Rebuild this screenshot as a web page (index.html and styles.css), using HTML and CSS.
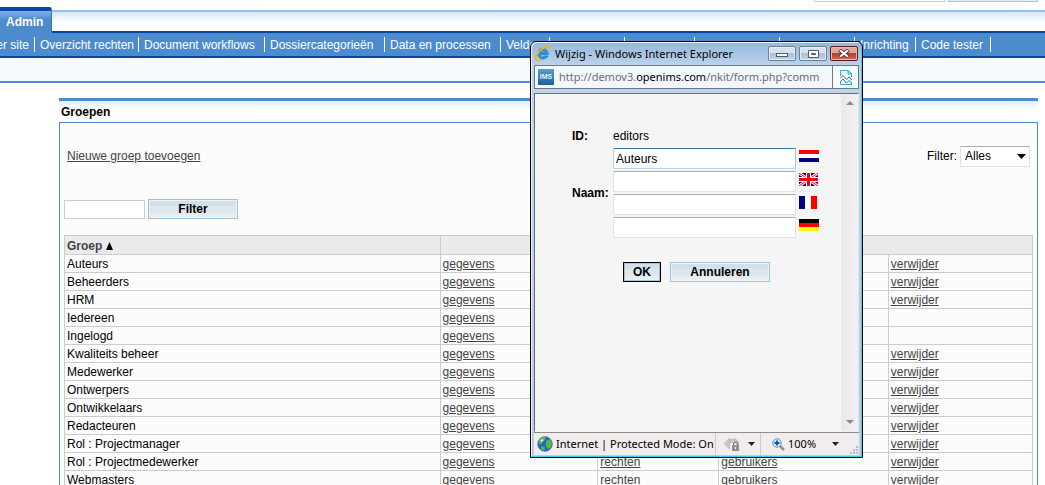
FILE: index.html
```html
<!DOCTYPE html>
<html lang="nl">
<head>
<meta charset="utf-8">
<title>Groepen</title>
<link rel="stylesheet" href="styles.css">
</head>
<body>
<header class="top">
  <div class="search"><span class="search-field"></span><span class="search-button"></span></div>
  <div class="tabs"><a class="tab" href="#">Admin</a></div>
  <nav>
    <ul class="nav">
      <li class="nav-first"><a href="#">Beheer site</a></li>
      <li class="nav-rights"><a href="#">Overzicht rechten</a></li>
      <li class="nav-flows"><a href="#">Document workflows</a></li>
      <li class="nav-cats"><a href="#">Dossiercategorieën</a></li>
      <li class="nav-data"><a href="#">Data en processen</a></li>
      <li class="nav-fields"><a href="#">Velden</a></li>
      <li class="slot-m"></li>
      <li class="slot-s"></li>
      <li class="slot-l"></li>
      <li class="slot-m"></li>
      <li class="nav-setup"><a href="#">Inrichting</a></li>
      <li class="slot-m"><a href="#">Code tester</a></li>
    </ul>
  </nav>
  <div class="band"></div>
</header>

<main class="panel">
  <h1>Groepen</h1>
  <div class="panel-body">
    <div class="tools">
      <a href="#">Nieuwe groep toevoegen</a>
      <div class="type-filter">
        <label for="type">Filter:</label>
        <span class="select-box">
          <select id="type"><option>Alles</option></select>
          <svg width="9" height="5" viewBox="0 0 9 5"><path d="M0 0h9L4.500 5z"/></svg>
        </span>
      </div>
    </div>
    <form class="search-row">
      <input type="text" aria-label="Zoek groep">
      <button class="btn wide" type="button">Filter</button>
    </form>
    <table class="groups">
      <colgroup><col class="c1"><col class="c2"><col class="c3"><col class="c4"><col class="c5"></colgroup>
      <thead>
        <tr><th><a href="#">Groep</a> <svg width="7" height="8" viewBox="0 0 7 8"><path d="M3.500 0L7 8H0z"/></svg></th><th colspan="4"></th></tr>
      </thead>
      <tbody>
        <tr><td>Auteurs</td><td><a href="#">gegevens</a></td><td><a href="#">rechten</a></td><td><a href="#">gebruikers</a></td><td><a href="#">verwijder</a></td></tr>
        <tr><td>Beheerders</td><td><a href="#">gegevens</a></td><td><a href="#">rechten</a></td><td><a href="#">gebruikers</a></td><td><a href="#">verwijder</a></td></tr>
        <tr><td>HRM</td><td><a href="#">gegevens</a></td><td><a href="#">rechten</a></td><td><a href="#">gebruikers</a></td><td><a href="#">verwijder</a></td></tr>
        <tr><td>Iedereen</td><td><a href="#">gegevens</a></td><td><a href="#">rechten</a></td><td></td><td></td></tr>
        <tr><td>Ingelogd</td><td><a href="#">gegevens</a></td><td><a href="#">rechten</a></td><td></td><td></td></tr>
        <tr><td>Kwaliteits beheer</td><td><a href="#">gegevens</a></td><td><a href="#">rechten</a></td><td><a href="#">gebruikers</a></td><td><a href="#">verwijder</a></td></tr>
        <tr><td>Medewerker</td><td><a href="#">gegevens</a></td><td><a href="#">rechten</a></td><td><a href="#">gebruikers</a></td><td><a href="#">verwijder</a></td></tr>
        <tr><td>Ontwerpers</td><td><a href="#">gegevens</a></td><td><a href="#">rechten</a></td><td><a href="#">gebruikers</a></td><td><a href="#">verwijder</a></td></tr>
        <tr><td>Ontwikkelaars</td><td><a href="#">gegevens</a></td><td><a href="#">rechten</a></td><td><a href="#">gebruikers</a></td><td><a href="#">verwijder</a></td></tr>
        <tr><td>Redacteuren</td><td><a href="#">gegevens</a></td><td><a href="#">rechten</a></td><td><a href="#">gebruikers</a></td><td><a href="#">verwijder</a></td></tr>
        <tr><td>Rol : Projectmanager</td><td><a href="#">gegevens</a></td><td><a href="#">rechten</a></td><td><a href="#">gebruikers</a></td><td><a href="#">verwijder</a></td></tr>
        <tr><td>Rol : Projectmedewerker</td><td><a href="#">gegevens</a></td><td><a href="#">rechten</a></td><td><a href="#">gebruikers</a></td><td><a href="#">verwijder</a></td></tr>
        <tr><td>Webmasters</td><td><a href="#">gegevens</a></td><td><a href="#">rechten</a></td><td><a href="#">gebruikers</a></td><td><a href="#">verwijder</a></td></tr>
      </tbody>
    </table>
  </div>
</main>

<section class="window">
  <div class="titlebar">
    <svg width="17" height="17" viewBox="0 0 17 17">
      <path d="M8.500 3.200A5.400 5.400 0 1 0 13.800 11h-3.300a2.400 2.400 0 0 1-4.400-1.300h8A5.600 5.600 0 0 0 8.500 3.200zM6.200 7.500a2.400 2.400 0 0 1 4.600 0z" fill="#2f97e8" stroke="#1565ae" stroke-width=".6" fill-rule="evenodd"/>
      <path d="M3 15.500C-.5 14 3 7 8.500 3.500 12.500 1 16 1 15.300 4.500" fill="none" stroke="#f5b31a" stroke-width="1.800"/>
      <path d="M2.500 15.200c1.500.8 3.200 0 4.700-1" fill="none" stroke="#f5b31a" stroke-width="1.700"/>
    </svg>
    <span class="caption">Wijzig - Windows Internet Explorer</span>
    <div class="controls">
      <button type="button" aria-label="Minimaliseren"><svg class="min" width="12" height="5" viewBox="0 0 12 5"><rect x=".5" y=".5" width="11" height="3" fill="#fff" stroke="#555c66"/></svg></button>
      <button type="button" aria-label="Maximaliseren"><svg width="11" height="8" viewBox="0 0 11 8"><path d="M.5.5h10v7H.5z" fill="#fff" stroke="#555c66"/><path d="M3.500 3.500h4v1h-4z" fill="#a9bdd3" stroke="#555c66"/></svg></button>
      <button class="close" type="button" aria-label="Sluiten"><svg width="12" height="9" viewBox="0 0 12 9"><path d="M1.500 1l9 7M10.500 1l-9 7" stroke="#54333a" stroke-width="4"/><path d="M2 1.200l8 6.600M10 1.200L2 7.800" stroke="#fff" stroke-width="2"/></svg></button>
    </div>
  </div>
  <div class="address">
    <span class="favicon">IMS</span>
    <span class="url">http://demov3.<b>openims.com</b>/nkit/form.php?comm</span>
    <button class="compat" type="button" aria-label="Compatibiliteit">
      <svg width="12" height="15" viewBox="0 0 12 15" fill="none"><path d="M.5 6V.5h7.500l3.500 3.500v3M.5 11v3.500h11V12" fill="none" stroke="#2fb0dc"/><path d="M8 .5V4h3.500z" fill="#8fdcf2" stroke="#2fb0dc"/><path d="M0 8.500l3-3 3.500 4L9 7l3 3M0 12l3-3 3.500 4L9 10.500l3 3" stroke="#2f6ea8"/></svg>
    </button>
  </div>
  <div class="viewport">
    <form class="edit">
      <b>ID:</b><span>editors</span>
      <b>Naam:</b>
      <div class="names">
        <div class="name-row"><input class="active" type="text" value="Auteurs" aria-label="Naam Nederlands">
          <svg width="20" height="12" viewBox="0 0 20 12"><path fill="#fff" d="M0 0h20v12H0z"/><path fill="#f00" d="M0 0h20v4H0z"/><path fill="#000080" d="M0 8h20v4H0z"/></svg></div>
        <div class="name-row"><input type="text" aria-label="Naam Engels">
          <svg width="19" height="13" viewBox="0 0 19 13"><path fill="#000080" d="M0 0h19v13H0z"/><path stroke="#fff" stroke-width="3" d="M0 0l19 13M19 0L0 13"/><path stroke="#f00" d="M0 0l19 13M19 0L0 13"/><path fill="#fff" d="M7 0h5v13H7zM0 4h19v5H0z"/><path fill="#f00" d="M8 0h3v13H8zM0 5h19v3H0z"/></svg></div>
        <div class="name-row"><input type="text" aria-label="Naam Frans">
          <svg width="18" height="13" viewBox="0 0 18 13"><path fill="#000080" d="M0 0h6v13H0z"/><path fill="#fff" d="M6 0h6v13H6z"/><path fill="#f00" d="M12 0h6v13h-6z"/></svg></div>
        <div class="name-row"><input type="text" aria-label="Naam Duits">
          <svg width="20" height="12" viewBox="0 0 20 12"><path d="M0 0h20v4H0z"/><path fill="#f00" d="M0 4h20v4H0z"/><path fill="#ff0" d="M0 8h20v4H0z"/></svg></div>
      </div>
      <div class="actions">
        <button class="btn default" type="button">OK</button>
        <button class="btn cancel" type="button">Annuleren</button>
      </div>
    </form>
    <div class="scrollbar">
      <svg width="8" height="4" viewBox="0 0 8 4"><path d="M0 4h8L4 0z" fill="#8a8a8a"/></svg>
      <svg width="8" height="4" viewBox="0 0 8 4"><path d="M0 0h8L4 4z" fill="#8a8a8a"/></svg>
    </div>
  </div>
  <div class="status">
    <div class="zone">
      <svg width="16" height="16" viewBox="0 0 16 16"><circle cx="8" cy="8" r="7.500" fill="#2a62c4"/><path d="M2 4c2-3 5-3.500 7-3L8 4 6 5 5 8 1.500 8zM9 5l4-2 2 4-1 4-3 2-2-3zM4 10l4 1-1 4-3-2z" fill="#53b848"/><path d="M3 5l2-2 2 1-2 2z" fill="#d8f2c8"/><circle cx="8" cy="8" r="7.400" fill="none" stroke="#6f8fb5" stroke-width=".8"/></svg>
      <span>Internet | Protected Mode: On</span>
    </div>
    <div class="privacy">
      <svg width="16" height="14" viewBox="0 0 16 14"><path d="M0 6.500L5.500 1v11zM6 3c5-2.500 9 0 9 5l-3-1.500C10.500 5 8 5 6 6z" fill="#c8c8c8" stroke="#a8a8a8" stroke-width=".6"/><path d="M9.500 8V7a2 2 0 0 1 4 0v1" fill="none" stroke="#6f6f6f"/><path d="M8 8h7v6H8z" fill="#8f8f8f"/><path d="M11 10h1v2h-1z" fill="#fff"/></svg>
      <svg width="7" height="4" viewBox="0 0 7 4"><path d="M0 0h7L3.500 4z" fill="#222"/></svg>
    </div>
    <div class="zoom">
      <svg width="13" height="13" viewBox="0 0 13 13"><path d="M8 8l4 4" stroke="#a98a68" stroke-width="2.500"/><circle cx="5" cy="5" r="4.200" fill="#d9efff" stroke="#5b8fc7"/><path d="M2.500 5h5M5 2.500v5" stroke="#0b4fa8" stroke-width="1.800"/></svg>
      <span>100%</span>
      <svg class="zoom-arrow" width="7" height="4" viewBox="0 0 7 4"><path d="M0 0h7L3.500 4z" fill="#222"/></svg>
      <svg class="grip" width="8" height="8" viewBox="0 0 8 8"><path d="M6 0h2v2H6zM3 3h2v2H3zM6 3h2v2H6zM0 6h2v2H0zM3 6h2v2H3zM6 6h2v2H6z" fill="#bbb"/></svg>
    </div>
  </div>
</section>
</body>
</html>
```
FILE: styles.css
```css
* { box-sizing: border-box; }
body {
  margin: 0;
  height: 100vh;
  overflow: hidden;
  position: relative;
  background: #fff;
  color: #000;
  font: 12px/14px "Liberation Sans", Arial, sans-serif;
}
button, input, select { font: inherit; color: inherit; margin: 0; }
svg { display: block; flex: none; }
ul { list-style: none; margin: 0; padding: 0; }

.search { display: flex; justify-content: flex-end; gap: 3px; height: 7px; padding-right: 7px; }
.search-field { width: 131px; height: 2px; border: 1px solid #ccc; border-top: 0; }
.search-button { width: 90px; height: 2px; background: #e6eef4; border: 1px solid #a9c3d9; border-top: 0; }
.tabs {
  height: 24px;
  background: linear-gradient(#fff 3px, #94c0e9 3px, #94c0e9 5px, #d3e6f6 5px, #fff 15px);
}
.tab {
  display: block;
  width: 52px;
  height: 26px;
  padding: 7px 0 0 6px;
  border-top: 4px solid #0346a8;
  border-right: 1px solid #41719f;
  border-top-right-radius: 3px;
  background: linear-gradient(#82b0e2, #4d8bcf 9px);
  color: #fff;
  font-weight: bold;
  line-height: 8px;
  text-decoration: none;
  position: relative;
  z-index: 1;
}
.nav {
  display: flex;
  align-items: center;
  height: 27px;
  border: solid #0346a8;
  border-width: 2px 0;
  background: #4d8bcf;
  overflow: hidden;
}
.nav li {
  flex: none;
  height: 15px;
  padding-left: 5px;
  border-right: 1px solid #fff;
  line-height: 17px;
  white-space: nowrap;
}
.nav a { color: #fff; text-decoration: none; }
.nav .nav-first { width: 35px; padding-right: 5px; display: flex; justify-content: flex-end; }
.nav .nav-rights { width: 104px; }
.nav .nav-flows { width: 126px; }
.nav .nav-cats { width: 120px; }
.nav .nav-data { width: 116px; }
.nav .nav-fields { width: 49px; }
.nav .nav-setup { width: 61px; }
.nav .slot-s { width: 70px; }
.nav .slot-m { width: 75px; }
.nav .slot-l { width: 85px; }
.band { height: 25px; background: #f5fafe; border-bottom: 2px solid #4d8bcf; }

.panel { margin: 15px 7px 0 59px; }
.panel h1 {
  margin: 0;
  height: 24px;
  padding: 4px 2px;
  border-top: 3px solid #4d8bcf;
  background: linear-gradient(#dceefa, #fff 8px);
  font-size: 12px;
  line-height: 14px;
}
.panel-body {
  padding: 22px 4px 0;
  border: 1px solid #4d8bcf;
  background: #fcfcfc;
}
.panel a { color: #444; }
.tools { display: flex; justify-content: space-between; align-items: center; height: 22px; padding: 0 3px; }
.type-filter { display: flex; align-items: center; gap: 3px; }
.select-box { position: relative; }
.select-box select {
  display: block;
  width: 70px;
  height: 21px;
  padding: 0 4px;
  appearance: none;
  border: 1px solid #dfe0e8;
  border-top-color: #abadb3;
  background: #fff;
}
.select-box svg { position: absolute; right: 4px; top: 8px; }
.search-row { display: flex; align-items: center; gap: 3px; margin-top: 32px; }
.search-row input { width: 81px; height: 19px; border: 1px solid #ccc; background: #fff; }
.btn {
  height: 20px;
  padding: 0;
  border: 1px solid #a5c1d8;
  background: linear-gradient(#d3e0ea, #d3e0ea 6px, #dce6ed 6px, #dce6ed 11px, #e9eff3 15px);
  box-shadow: inset 0 0 0 1px #edf2f6;
  font-weight: bold;
  line-height: 16px;
}
.wide { width: 90px; }
.groups { width: 100%; margin-top: 16px; border-collapse: collapse; table-layout: fixed; }
.groups th, .groups td { padding: 1px 2px 0; border: 1px solid #ccc; text-align: left; }
.groups th { height: 19px; padding-top: 2px; background: #ebebeb; }
.groups th a { text-decoration: none; }
.groups th svg { display: inline-block; }
.groups td { height: 18px; line-height: 16px; }
.c1 { width: 38.800%; }
.c2 { width: 16.300%; }
.c3 { width: 12.500%; }
.c4 { width: 17.500%; }
.c5 { width: 14.900%; }

.window {
  position: absolute;
  left: 530px;
  top: 41px;
  z-index: 2;
  width: 333px;
  padding: 0 3px 2px;
  border: 1px solid #000;
  border-radius: 6px 6px 0 0;
  background: linear-gradient(#93b8dc, #bdd4ec 24px, #b4cde8);
  box-shadow: inset -1px -1px 0 #35d0f2, inset 1px 1px 0 #e9f4fd;
  font-family: "Noto Sans", "Open Sans", sans-serif;
  font-size: 11px;
}
.titlebar { display: flex; align-items: center; gap: 4px; height: 23px; }
.caption { flex: 1; white-space: nowrap; }
.controls { display: flex; gap: 3px; padding-right: 1px; }
.controls button {
  display: flex;
  align-items: center;
  justify-content: center;
  width: 28px;
  height: 15px;
  padding: 0;
  border: 1px solid #6b7f95;
  border-radius: 2px;
  background: linear-gradient(#d5e2f0 45%, #a9c0d9 50%, #bfd3e8);
  box-shadow: inset 0 0 0 1px #e4eef8;
}
.controls .min { margin-top: 4px; }
.controls .close {
  border-color: #5c1a1a;
  background: linear-gradient(#e3a79d 45%, #b93a25 50%, #cf7464);
  box-shadow: inset 0 0 0 1px #eab9b0;
}
.address {
  display: flex;
  align-items: center;
  gap: 5px;
  height: 24px;
  padding-left: 3px;
  border: 1px solid #6d7884;
  background: #f2f7fc;
}
.favicon {
  width: 16px;
  height: 16px;
  background: linear-gradient(#5aa0cf, #1c5c9c);
  color: #e5f3fb;
  font: bold 7px/16px "Liberation Sans", Arial, sans-serif;
  text-align: center;
}
.url { flex: 1; color: #6d6d6d; white-space: nowrap; }
.url b { color: #000; font-weight: normal; }
.compat {
  display: flex;
  align-items: center;
  justify-content: center;
  width: 26px;
  height: 22px;
  padding: 0;
  border: 0;
  border-left: 1px solid #6d7884;
  background: #f7fbfe;
}
.viewport {
  display: flex;
  margin-top: 4px;
  height: 339px;
  border: 1px solid #6d6d6d;
  border-right-color: #e6e6e6;
  border-bottom-color: #f2f2f2;
  background: #f5f5f5;
  font-family: "Liberation Sans", Arial, sans-serif;
  font-size: 12px;
}
.edit {
  flex: 1;
  display: grid;
  grid-template-columns: 41px 1fr;
  align-content: start;
  align-items: center;
  padding: 35px 0 0 37px;
}
.names { display: grid; gap: 2px; padding-top: 5px; }
.name-row { display: flex; align-items: flex-start; gap: 3px; }
.edit > b:nth-of-type(2) { padding-top: 5px; }
.name-row input {
  width: 183px;
  height: 21px;
  padding: 0 2px;
  border: 1px solid #e2e3ea;
  border-top-color: #abadb3;
  border-radius: 1px;
  background: #fff;
}
.name-row .active { border-color: #3d7bad #a4c9e3 #b7d9ed #b5cfe7; }
.name-row svg { margin-top: 2px; }
.actions { grid-column: 1 / -1; display: flex; gap: 9px; padding: 24px 0 0 51px; }
.default { width: 38px; border-color: #000; box-shadow: inset 0 0 0 1px #a5c1d8; }
.cancel { width: 100px; }
.scrollbar {
  display: flex;
  flex-direction: column;
  justify-content: space-between;
  align-items: center;
  width: 17px;
  padding: 7px 0;
  background: linear-gradient(90deg, #e9e9e9, #f1f1f1);
}
.status {
  display: flex;
  height: 23px;
  border-top: 1px solid #8c8c8c;
  background: #f1edec;
}
.status > div { display: flex; align-items: center; white-space: nowrap; }
.zone { flex: 1; gap: 3px; padding-left: 3px; min-width: 0; }
.privacy { width: 45px; gap: 8px; padding-left: 8px; border-left: 1px solid #ccc; }
.zoom { position: relative; width: 99px; gap: 3px; padding-left: 11px; border-left: 1px solid #ccc; }
.zoom-arrow { margin-left: 13px; }
.grip { position: absolute; right: 1px; bottom: 1px; }
```
